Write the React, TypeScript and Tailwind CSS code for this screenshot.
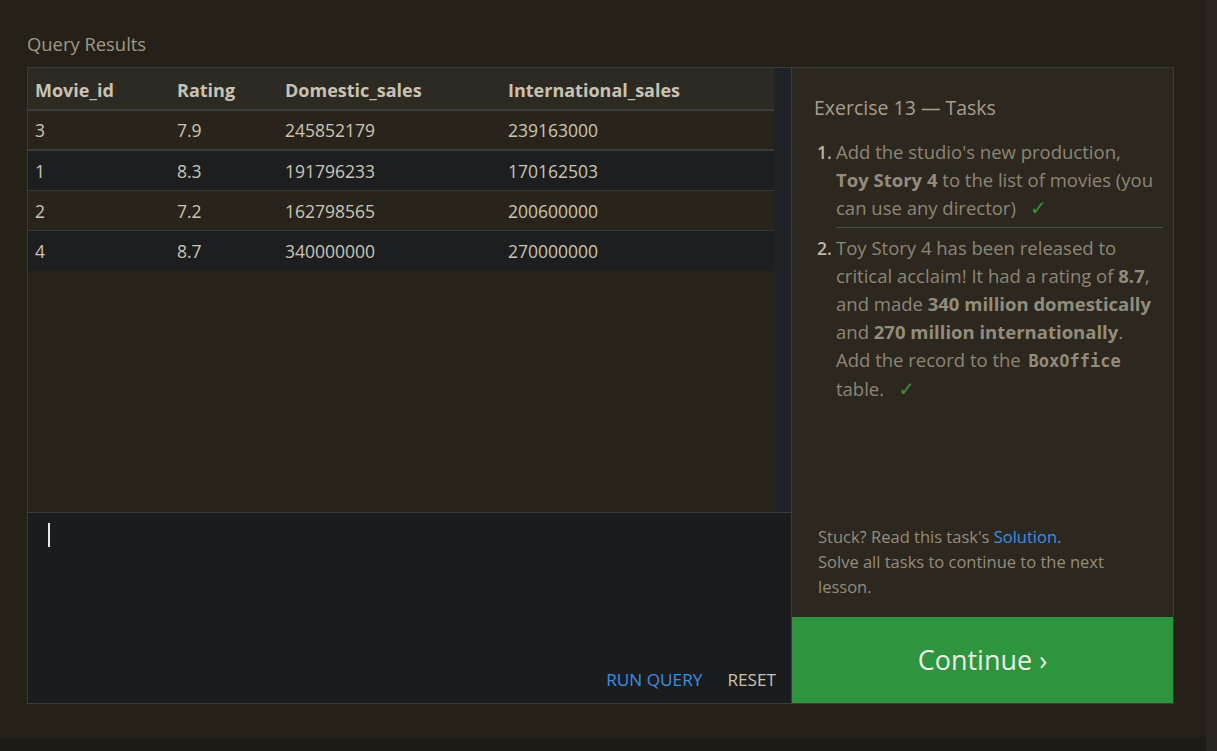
import React from "react";

const rows = [
  ["3", "7.9", "245852179", "239163000"],
  ["1", "8.3", "191796233", "170162503"],
  ["2", "7.2", "162798565", "200600000"],
  ["4", "8.7", "340000000", "270000000"],
];

export default function App() {
  const font = { fontFamily: '"Open Sans", "Noto Sans", sans-serif' };
  return (
    <div className="flex h-[751px] w-full bg-[#252119] overflow-hidden" style={font}>
      <div className="flex w-[1206px] flex-col">
        <div className="flex flex-1 flex-col px-[27px] pt-[32px]">
          <div className="h-[35px] text-[18.4px] leading-[24px] text-[#a09886]">Query Results</div>
          <div className="flex h-[637px] w-[1147px] border border-[#3a3c3b]">
            <div className="flex w-[763px] flex-col">
              <div className="flex flex-1 bg-[#27231a]">
                <div className="w-[746px]">
                  <div className="flex h-[43px] items-center border-b-2 border-[#3b3e3f] bg-[#2c2a22] pt-[3px] text-[18px] font-bold text-[#c9c2b3]">
                    <div className="w-[142px] pl-[7px]">Movie_id</div>
                    <div className="w-[108px] pl-[7px]">Rating</div>
                    <div className="w-[223px] pl-[7px]">Domestic_sales</div>
                    <div className="flex-1 pl-[7px]">International_sales</div>
                  </div>
                  {rows.map((r, i) => (
                    <div
                      key={i}
                      className={
                        "flex h-[40px] items-center pt-[1px] text-[17.5px] text-[#cbc4b5] " +
                        (i % 2 === 0 ? "bg-[#28241b] " : "bg-[#1c1e1f] ") +
                        (i === 0 ? "border-b-2 border-[#3a3c3c]" : i < 3 ? "border-b border-[#383835]" : "")
                      }
                    >
                      <div className="w-[142px] pl-[7px]">{r[0]}</div>
                      <div className="w-[108px] pl-[7px]">{r[1]}</div>
                      <div className="w-[223px] pl-[7px]">{r[2]}</div>
                      <div className="flex-1 pl-[7px]">{r[3]}</div>
                    </div>
                  ))}
                </div>
                <div className="w-[17px] bg-[#1f2326]" />
              </div>
              <div className="relative flex h-[191px] flex-col border-t border-[#3a3c3c] bg-[#1b1c1e]">
                <div className="ml-[20px] mt-[10px] h-[24px] w-[2px] bg-[#e8e8e8]" />
                <div className="mt-auto flex justify-end gap-[25px] pb-[11px] pr-[15px] text-[17.2px] leading-[24px]">
                  <span className="text-[#3b8fe3]">RUN QUERY</span>
                  <span className="text-[#c9c2b3]">RESET</span>
                </div>
              </div>
            </div>
            <div className="flex w-[382px] flex-col border-l border-[#3a3c3c] bg-[#2c281f]">
              <div className="flex flex-1 flex-col pl-[22px] pr-[10px] pt-[27px]">
                <div className="text-[19.5px] leading-[26px] text-[#a69e8c]">Exercise 13 — Tasks</div>
                <ol className="mt-[17px] text-[18.5px] leading-[28px] text-[#8c8676]">
                  <li className="flex">
                    <span className="w-[22px] shrink-0 pl-[3px] text-[17.5px] font-semibold text-[#bdb6a6]">1.</span>
                    <div className="flex-1 border-b border-[#4a4c4b] pb-[5px]">
                      Add the studio's new production,
                      <br />
                      <b className="text-[#928c7c]">Toy Story 4</b> to the list of movies (you can use any director)
                      <span className="ml-[14px] text-[20px] text-[#3e8a3e]" style={{ fontFamily: '"DejaVu Sans", sans-serif' }}>✓</span>
                    </div>
                  </li>
                  <li className="mt-[6px] flex">
                    <span className="w-[22px] shrink-0 pl-[3px] text-[17.5px] font-semibold text-[#bdb6a6]">2.</span>
                    <div className="flex-1 pr-[8px]">
                      Toy Story 4 has been released to critical acclaim! It had a rating of <b className="text-[#928c7c]">8.7</b>, and made{" "}
                      <b className="text-[#928c7c]">340 million domestically</b> and <b className="text-[#928c7c]">270 million internationally</b>.
                      Add the record to the{" "}
                      <code className="px-[3px] font-bold text-[#928c7c]" style={{ fontFamily: '"DejaVu Sans Mono", monospace', fontSize: "17px" }}>
                        BoxOffice
                      </code>{" "}
                      table.
                      <span className="ml-[14px] text-[20px] text-[#3e8a3e]" style={{ fontFamily: '"DejaVu Sans", sans-serif' }}>✓</span>
                    </div>
                  </li>
                </ol>
                <div className="mt-auto pb-[18px] pl-[4px] pr-[40px] text-[16.5px] leading-[25px] text-[#948d7d]">
                  Stuck? Read this task's <span className="text-[#3b8fe3]">Solution</span>.
                  <br />
                  Solve all tasks to continue to the next lesson.
                </div>
              </div>
              <div className="flex h-[86px] items-center justify-center bg-[#2e943e] text-[27px] text-[#e8efe6]">
                Continue ›
              </div>
            </div>
          </div>
        </div>
        <div className="h-[14px] bg-[#1e1c16]" />
      </div>
      <div className="flex-1 bg-[#2b2522]" />
    </div>
  );
}
